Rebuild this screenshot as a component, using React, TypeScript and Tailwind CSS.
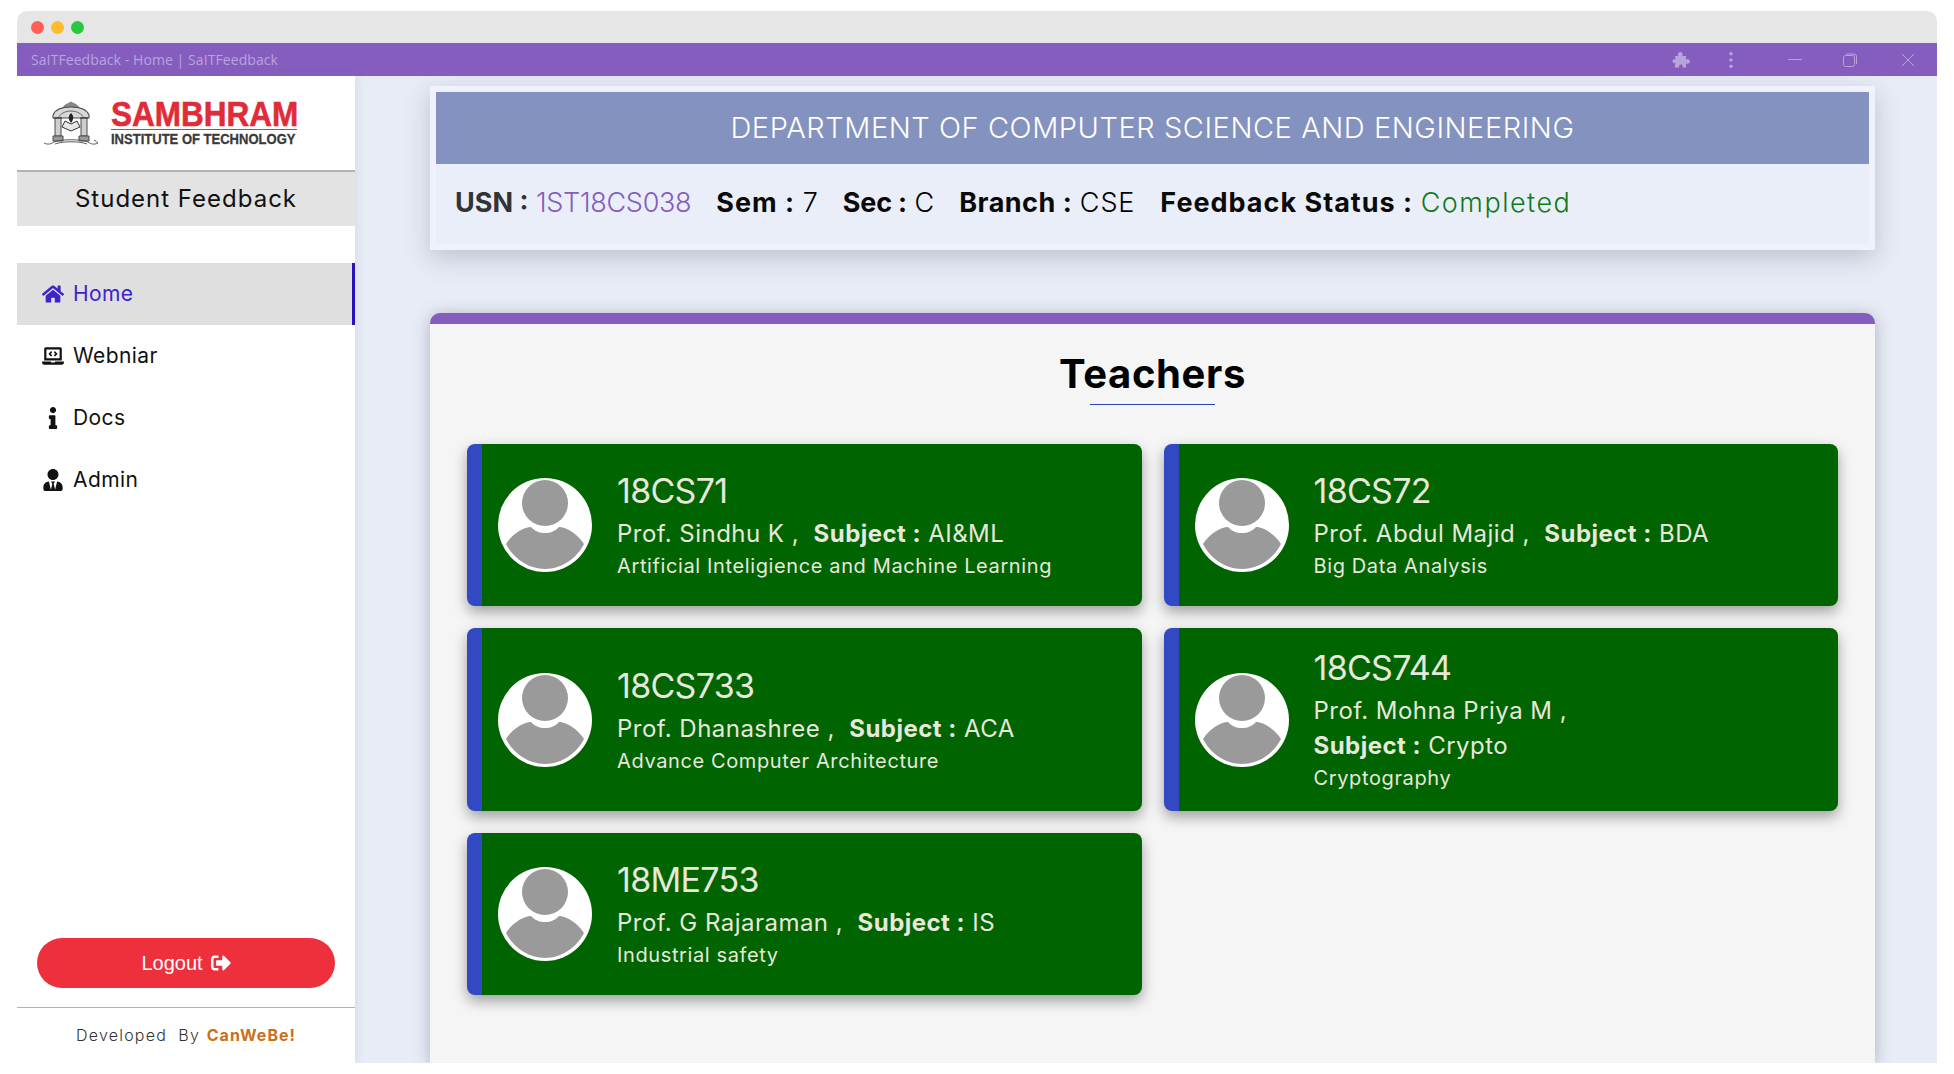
import { FaHome, FaInfo, FaLaptopCode, FaSignOutAlt, FaUserTie } from "react-icons/fa";

const teachers = [
  { code: "18CS71", name: "Prof. Sindhu K ,", subject: "AI&ML", full: "Artificial Inteligience and Machine Learning" },
  { code: "18CS72", name: "Prof. Abdul Majid ,", subject: "BDA", full: "Big Data Analysis" },
  { code: "18CS733", name: "Prof. Dhanashree ,", subject: "ACA", full: "Advance Computer Architecture" },
  { code: "18CS744", name: "Prof. Mohna Priya M ,", subject: "Crypto", full: "Cryptography", wrap: true },
  { code: "18ME753", name: "Prof. G Rajaraman ,", subject: "IS", full: "Industrial safety" },
];

function Emblem() {
  return (
    <svg viewBox="0 0 56 45" className="w-[56px] h-[45px] shrink-0" fill="none" stroke="#4a4a4a" strokeWidth="1">
      {/* crown */}
      <path d="M19 8c2-4 5-5 9-7 4 2 7 3 9 7z" fill="#8a8a8a" strokeWidth="0.5" />
      {/* arch */}
      <path d="M10 14c2-5 9-8 18-8s16 3 18 8v3H10z" fill="#d8d8d8" strokeWidth="1.1" />
      <path d="M15 17c2-4 7-7 13-7s11 3 13 7" stroke="#666" />
      {/* pillars */}
      <path d="M12 17h6v18h-6zM38 17h6v18h-6z" fill="#cfcfcf" />
      <path d="M11 17h8M37 17h8" strokeWidth="1.6" />
      {/* book and flame */}
      <path d="M19 26l9 4 9-4-3-6-6 3-6-3z" fill="#e8e8e8" stroke="#333" />
      <path d="M28 12c3 3 3 6 0 10-3-4-3-7 0-10z" fill="#222" stroke="none" />
      {/* bases */}
      <path d="M10 35h10v5H10zM36 35h10v5H36z" fill="#9a9a9a" />
      {/* ribbon */}
      <path d="M1 42c4 2 7 1 10-1 7-3 27-3 34 0 3 2 6 3 10 1l-4-3" strokeWidth="0.9" />
      <path d="M12 43c8-3 24-3 32 0" strokeWidth="0.9" />
    </svg>
  );
}

function Avatar() {
  return (
    <svg viewBox="0 0 94 94" className="w-[94px] h-[94px] shrink-0">
      <circle cx="47" cy="47" r="47" fill="#fff" />
      <circle cx="47" cy="25" r="23" fill="#9a9a9a" />
      <path d="M8 66c6-10 18-17 25-17 4 4 8 6 14 6s10-2 14-6c7 0 19 7 25 17-7 14-22 25-39 25S15 80 8 66z" fill="#9a9a9a" />
    </svg>
  );
}

function NavItem({ icon, label, active }: { icon: React.ReactNode; label: string; active?: boolean }) {
  return (
    <div
      className={`h-[62px] flex items-center pl-[24px] text-[21px] ${
        active ? "bg-[#dfdfdf] text-[#3f22cc] border-r-[3px] border-[#2a10b8]" : "text-[#111]"
      }`}
    >
      <span className="w-[24px] flex justify-center text-[22px]">{icon}</span>
      <span className="ml-[8px] tracking-[0.4px]">{label}</span>
    </div>
  );
}

export default function App() {
  return (
    <div className="w-[1954px] h-[1074px] bg-white px-[17px] pt-[11px] pb-[11px] overflow-hidden font-['Inter',sans-serif]">
      <div className="h-full flex flex-col overflow-hidden rounded-t-[10px]">
        {/* window chrome */}
        <div className="h-[32px] bg-[#e6e6e6] flex items-center gap-[7px] pl-[14px] shrink-0">
          <span className="w-[13px] h-[13px] rounded-full bg-[#ff5f57]" />
          <span className="w-[13px] h-[13px] rounded-full bg-[#febc2e]" />
          <span className="w-[13px] h-[13px] rounded-full bg-[#28c840]" />
        </div>
        <div className="h-[33px] bg-[#845dbf] flex items-center pl-[14px] text-[14px] text-[#b9a3de] font-['Open_Sans',sans-serif] tracking-[0.08px] shrink-0">
          <span>SaITFeedback - Home | SaITFeedback</span>
          <div className="ml-auto flex items-center text-[#b9a3de]">
            <svg viewBox="0 0 18 18" className="w-[18px] h-[18px]" fill="currentColor">
              <path d="M3 5h3.2C5.6 3.6 6 1 8.3 1s2.7 2.6 2.1 4H14v3.4c1.6-.6 4-.1 4 2s-2.4 2.6-4 2V16.500h-3.400c.5-1.500.2-3-1.600-3s-2.300 1.500-1.800 3H2.500l1-4.500C2.200 12.500.5 11.800.5 10.200S2.300 8 3.500 8.500z" />
            </svg>
            <svg viewBox="0 0 4 18" className="w-[4px] h-[16px] ml-[39px]" fill="currentColor">
              <circle cx="2" cy="2" r="2" />
              <circle cx="2" cy="9" r="2" />
              <circle cx="2" cy="16" r="2" />
            </svg>
            <svg viewBox="0 0 14 14" className="w-[14px] h-[14px] ml-[55px]" stroke="currentColor" fill="none">
              <path d="M0 6.500h14" />
            </svg>
            <svg viewBox="0 0 14 14" className="w-[14px] h-[14px] ml-[41px]" stroke="currentColor" fill="none">
              <rect x="0.5" y="2.500" width="11" height="11" rx="2" />
              <path d="M3 1h8a2.500 2.500 0 0 1 2.500 2.500V11" />
            </svg>
            <svg viewBox="0 0 14 14" className="w-[14px] h-[14px] ml-[44px] mr-[22px]" stroke="currentColor" fill="none">
              <path d="M1 1l12 12M13 1L1 13" />
            </svg>
          </div>
        </div>

        <div className="flex-1 flex min-h-0">
          {/* sidebar */}
          <aside className="w-[338px] shrink-0 bg-white flex flex-col shadow-[2px_0_8px_rgba(120,130,160,0.15)] z-10">
            <div className="h-[96px] flex items-center gap-[12px] border-b-2 border-[#b3b3b3] pl-[26px]">
              <Emblem />
              <div className="flex flex-col w-[186px] font-['Liberation_Sans',sans-serif] overflow-visible">
                <span className="inline-block origin-left scale-x-[0.9] text-[35px] leading-[28px] font-bold text-[#e02c38] [-webkit-text-stroke:0.6px_#e02c38] whitespace-nowrap">
                  SAMBHRAM
                </span>
                <span className="h-px bg-[#5a6a8a] mt-[1px]" />
                <span className="inline-block origin-left scale-x-[0.93] text-[14px] leading-[16px] mt-px font-bold text-[#3a3a3a] [-webkit-text-stroke:0.3px_#3a3a3a] whitespace-nowrap">
                  INSTITUTE OF TECHNOLOGY
                </span>
              </div>
            </div>
            <div className="h-[54px] bg-[#e3e3e3] flex items-center justify-center text-[24px] text-[#111] tracking-[1px]">
              Student Feedback
            </div>
            <nav className="mt-[37px]">
              <NavItem icon={<FaHome />} label="Home" active />
              <NavItem icon={<FaLaptopCode />} label="Webniar" />
              <NavItem icon={<FaInfo />} label="Docs" />
              <NavItem icon={<FaUserTie />} label="Admin" />
            </nav>
            <div className="mt-auto px-[20px] pb-[19px]">
              <button className="w-full h-[50px] rounded-full bg-[#ee2f3c] text-white text-[20px] flex items-center justify-center gap-[8px] font-['Liberation_Sans',sans-serif]">
                Logout <FaSignOutAlt className="text-[20px]" />
              </button>
            </div>
            <div className="h-[56px] border-t border-[#b3b3b3] flex items-center justify-center text-[16px] text-[#333] tracking-[1.2px] pb-[1px]">
              <span className="font-light">Developed&nbsp; By&nbsp;</span>
              <span className="font-bold text-[#cc6f18] ml-[1px] tracking-[1px]">CanWeBe!</span>
            </div>
          </aside>

          {/* main */}
          <main className="flex-1 min-w-0 bg-[#e8ecf6] pl-[75px] pr-[62px] pt-[10px] overflow-hidden flex flex-col">
            <section className="h-[164px] shrink-0 bg-[#eaeef8] border-[6px] border-[#f1f1fc] shadow-[0_8px_24px_rgba(60,70,90,0.25)]">
              <div className="h-[72px] bg-[#8492bf] flex items-center justify-center text-[29px] tracking-[0.55px] text-white font-light whitespace-nowrap">
                DEPARTMENT OF COMPUTER SCIENCE AND ENGINEERING
              </div>
              <div className="h-[78px] pl-[19px] pr-[19px] flex items-center gap-[25px] text-[27px] whitespace-nowrap">
                <span>
                  <b className="text-[#333] font-bold">USN :</b>{" "}
                  <span className="text-[#845dbf] font-light tracking-[-0.3px]">1ST18CS038</span>
                </span>
                <span>
                  <b className="font-bold text-[#0a0a0a] tracking-[1px]">Sem :</b> <span className="font-light">7</span>
                </span>
                <span>
                  <b className="font-bold text-[#0a0a0a] tracking-[-0.2px]">Sec :</b> <span className="font-light">C</span>
                </span>
                <span>
                  <b className="font-bold text-[#0a0a0a] tracking-[0.5px]">Branch :</b>{" "}
                  <span className="font-light tracking-[0.9px]">CSE</span>
                </span>
                <span>
                  <b className="font-bold text-[#0a0a0a] tracking-[1px]">Feedback Status :</b>{" "}
                  <span className="text-[#0f7a1a] font-light tracking-[1.5px]">Completed</span>
                </span>
              </div>
            </section>

            <section className="mt-[63px] flex-1 bg-[#f5f5f5] border-t-[11px] border-[#845dbf] rounded-t-[10px] px-[37px] shadow-[0_2px_16px_rgba(60,70,90,0.35)]">
              <h1 className="text-center text-[40px] font-bold text-black leading-[48px] mt-[26px] tracking-[0.6px]">
                Teachers
              </h1>
              <div className="w-[125px] h-px bg-[#2b45b8] mx-auto mt-[6px]" />
              <div className="grid grid-cols-2 gap-[22px] mt-[39px]">
                {teachers.map((t) => (
                  <div
                    key={t.code}
                    className="min-h-[162px] bg-[#006400] border-l-[15px] border-[#3249c3] rounded-[8px] flex items-center pl-[16px] text-[#e8e8dc] shadow-[0_6px_14px_rgba(0,0,0,0.35)] py-[19px]"
                  >
                    <Avatar />
                    <div className="ml-[25px]">
                      <div className="text-[34px] leading-[42px] tracking-[-0.7px]">{t.code}</div>
                      <div className="text-[24px] leading-[35px] mt-[4px] tracking-[0.47px]">
                        {t.name}
                        {t.wrap ? <br /> : <span>&nbsp; </span>}
                        <b className="font-bold">Subject :</b> {t.subject}
                      </div>
                      <div className="text-[20px] leading-[28px] mt-[1px] tracking-[0.62px]">{t.full}</div>
                    </div>
                  </div>
                ))}
              </div>
            </section>
          </main>
        </div>
      </div>
    </div>
  );
}
